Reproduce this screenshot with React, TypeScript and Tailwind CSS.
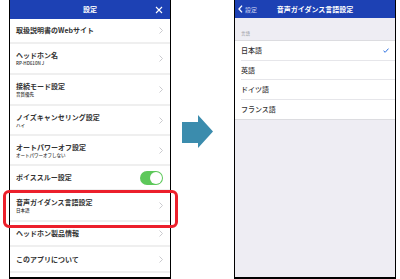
import React from "react";

const font = { fontFamily: '"Noto Sans CJK JP", "Noto Sans", sans-serif' };

const Chevron = () => (
  <svg width="4" height="7" viewBox="0 0 4 7" className="shrink-0">
    <polyline points="0.5,0.5 3.5,3.5 0.5,6.5" fill="none" stroke="#c4c4c8" strokeWidth="0.9" />
  </svg>
);

const Toggle = () => (
  <div className="w-[23px] h-[14px] rounded-full bg-[#5dc85a] flex items-center justify-end pr-[1px]">
    <div className="w-[12px] h-[12px] rounded-full bg-white" />
  </div>
);

type RowProps = { title: string; sub?: string; h: string; toggle?: boolean };

const SettingRow = ({ title, sub, h, toggle }: RowProps) => (
  <div className={`${h} flex items-center justify-between pl-[6px] pr-[7px] border-b-2 border-[#efefef]`}>
    <div className="flex flex-col gap-[1px]">
      <span className="text-[7px] leading-[9px] font-semibold text-[#333]">{title}</span>
      {sub && <span className="text-[4.5px] leading-[5px] font-medium text-[#333]">{sub}</span>}
    </div>
    {toggle ? <Toggle /> : <Chevron />}
  </div>
);

const LangRow = ({ label, checked, last }: { label: string; checked?: boolean; last?: boolean }) => (
  <div className="h-[19.5px] pl-[6px] bg-white">
    <div className={`h-full flex items-center justify-between pr-[6px] ${last ? "" : "border-b border-[#e6e6ea]"}`}>
      <span className="text-[7px] text-[#333] font-medium">{label}</span>
      {checked && (
        <svg width="6" height="5" viewBox="0 0 6 5">
          <polyline points="0.5,2.8 2.2,4.3 5.5,0.6" fill="none" stroke="#2a6fe0" strokeWidth="1" />
        </svg>
      )}
    </div>
  </div>
);

export default function App() {
  return (
    <div className="relative w-[400px] h-[279px] bg-white flex overflow-hidden" style={font}>
      {/* left phone */}
      <div className="ml-[9px] w-[162px] h-[279px] border-x border-b-2 border-black flex flex-col bg-white">
        <div className="h-[19px] bg-[#1d41b4] flex items-center shrink-0">
          <div className="w-[22px]" />
          <span className="flex-1 text-center text-white text-[7px] font-semibold">設定</span>
          <div className="w-[22px] flex justify-center">
            <svg width="8" height="8" viewBox="0 0 8 8">
              <path d="M1 1 L7 7 M7 1 L1 7" stroke="white" strokeWidth="1.1" />
            </svg>
          </div>
        </div>
        <SettingRow h="h-[25px]" title="取扱説明書のWebサイト" />
        <SettingRow h="h-[31px]" title="ヘッドホン名" sub="RP-HD610N J" />
        <SettingRow h="h-[31px]" title="接続モード設定" sub="音質優先" />
        <SettingRow h="h-[30px]" title="ノイズキャンセリング設定" sub="ハイ" />
        <SettingRow h="h-[30px]" title="オートパワーオフ設定" sub="オートパワーオフしない" />
        <SettingRow h="h-[25px]" title="ボイススルー設定" toggle />
        <SettingRow h="h-[31px]" title="音声ガイダンス言語設定" sub="日本語" />
        <SettingRow h="h-[25px]" title="ヘッドホン製品情報" />
        <SettingRow h="h-[26px]" title="このアプリについて" />
      </div>

      {/* arrow */}
      <div className="flex-1 pl-[11px] pt-[115px]">
        <svg width="31" height="34" viewBox="0 0 31 34">
          <polygon points="0,7 16,7 16,0 31,16.5 16,33 16,28 0,28" fill="#3b8cad" />
        </svg>
      </div>

      {/* right phone */}
      <div className="mr-[4px] w-[162px] h-[279px] border-x border-b-2 border-black flex flex-col bg-[#eeedf3]">
        <div className="h-[18px] bg-[#1d41b4] flex items-center shrink-0 relative">
          <div className="absolute left-[3px] flex items-center gap-[2px]">
            <svg width="5" height="8" viewBox="0 0 5 8">
              <polyline points="4,0.6 1,4 4,7.4" fill="none" stroke="white" strokeWidth="1.4" />
            </svg>
            <span className="text-[6px] text-[#c9d2f0]">設定</span>
          </div>
          <span className="flex-1 text-center text-white text-[7px] font-semibold">音声ガイダンス言語設定</span>
        </div>
        <div className="h-[22px] flex items-end pl-[6px] pb-[3px]">
          <span className="text-[4.5px] text-[#8e8e93]">言語</span>
        </div>
        <div className="border-y border-[#dcdce0]">
          <LangRow label="日本語" checked />
          <LangRow label="英語" />
          <LangRow label="ドイツ語" />
          <LangRow label="フランス語" last />
        </div>
      </div>

      {/* highlight */}
      <div className="absolute left-[3px] top-[190px] w-[175px] h-[38px] border-[3px] border-[#ec1f2b] rounded-[6px]" />
    </div>
  );
}
